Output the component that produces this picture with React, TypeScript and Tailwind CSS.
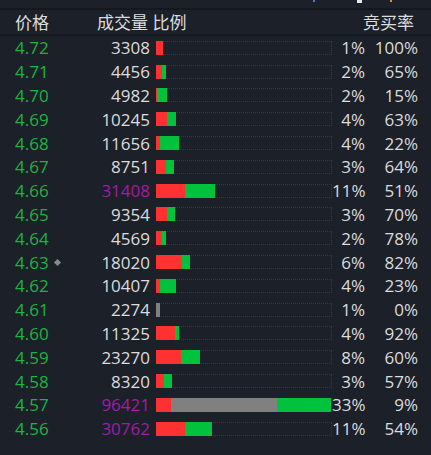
type Row = {
  price: string;
  vol: string;
  hot?: boolean;
  mark?: boolean;
  red: number;
  gray?: number;
  green: number;
  pct: string;
  rate: string;
};

const ROWS: Row[] = [
  { price: '4.72', vol: '3308', red: 7, green: 0, pct: '1%', rate: '100%' },
  { price: '4.71', vol: '4456', red: 6, green: 4, pct: '2%', rate: '65%' },
  { price: '4.70', vol: '4982', red: 1, green: 10, pct: '2%', rate: '15%' },
  { price: '4.69', vol: '10245', red: 11, green: 9, pct: '4%', rate: '63%' },
  { price: '4.68', vol: '11656', red: 4, green: 19, pct: '4%', rate: '22%' },
  { price: '4.67', vol: '8751', red: 10, green: 8, pct: '3%', rate: '64%' },
  { price: '4.66', vol: '31408', hot: true, red: 29, green: 30, pct: '11%', rate: '51%' },
  { price: '4.65', vol: '9354', red: 11, green: 8, pct: '3%', rate: '70%' },
  { price: '4.64', vol: '4569', red: 6, green: 4, pct: '2%', rate: '78%' },
  { price: '4.63', vol: '18020', mark: true, red: 26, green: 8, pct: '6%', rate: '82%' },
  { price: '4.62', vol: '10407', red: 4, green: 16, pct: '4%', rate: '23%' },
  { price: '4.61', vol: '2274', red: 0, gray: 4, green: 0, pct: '1%', rate: '0%' },
  { price: '4.60', vol: '11325', red: 19, green: 4, pct: '4%', rate: '92%' },
  { price: '4.59', vol: '23270', red: 25, green: 19, pct: '8%', rate: '60%' },
  { price: '4.58', vol: '8320', red: 8, green: 8, pct: '3%', rate: '57%' },
  { price: '4.57', vol: '96421', hot: true, red: 15, gray: 106, green: 54, pct: '33%', rate: '9%' },
  { price: '4.56', vol: '30762', hot: true, red: 29, green: 27, pct: '11%', rate: '54%' },
];

function Bar({ r }: { r: Row }) {
  return (
    <div className="relative flex h-[14px] w-[176px]">
      <div className="absolute inset-0 border border-l-0 border-dotted border-[#343a45]" />
      {r.red > 0 && <div className="relative h-full bg-[#ff3131]" style={{ width: r.red }} />}
      {r.gray ? <div className="relative h-full bg-[#808080]" style={{ width: r.gray }} /> : null}
      {r.green > 0 && <div className="relative h-full bg-[#00c23c]" style={{ width: r.green }} />}
    </div>
  );
}

export default function App() {
  return (
    <div
      className="h-[455px] w-[431px] overflow-hidden bg-[#1c2029] text-[17px] text-[#dcdcdc]"
      style={{ fontFamily: '"Open Sans", "Noto Sans CJK SC", sans-serif' }}
    >
      <div className="flex h-[8px] items-start">
        <span className="ml-[313px] h-[2px] w-[2px] bg-[#5a7fb8]" />
        <span className="ml-[42px] h-[3px] w-[5px] bg-[#e8e8e8]" />
        <span className="ml-[28px] h-[2px] w-[2px] bg-[#d09040]" />
      </div>
      <div className="h-[2px] bg-[#15181e]" />
      <div className="flex h-[24px] items-center leading-none">
        <span className="ml-[15px]">价格</span>
        <span className="ml-[48px]">成交量 比例</span>
        <span className="ml-auto mr-[17px]">竞买率</span>
      </div>
      <div className="h-[2px] bg-[#15181e]" />
      <div className="pt-[0px]">
        {ROWS.map((r) => (
          <div key={r.price} className="flex h-[23.8px] items-center pl-[15px] leading-none">
            <div className="flex w-[60px] items-center text-[#1db33f]">
              {r.price}
              {r.mark && <span className="ml-[6px] h-[5px] w-[5px] rotate-45 bg-[#8a8a8a]" />}
            </div>
            <div className={`w-[75px] text-right ${r.hot ? 'text-[#a31ba8]' : ''}`}>{r.vol}</div>
            <div className="ml-[6px]">
              <Bar r={r} />
            </div>
            <div className="w-[33px] text-right">{r.pct}</div>
            <div className="w-[53px] text-right">{r.rate}</div>
          </div>
        ))}
      </div>
    </div>
  );
}
